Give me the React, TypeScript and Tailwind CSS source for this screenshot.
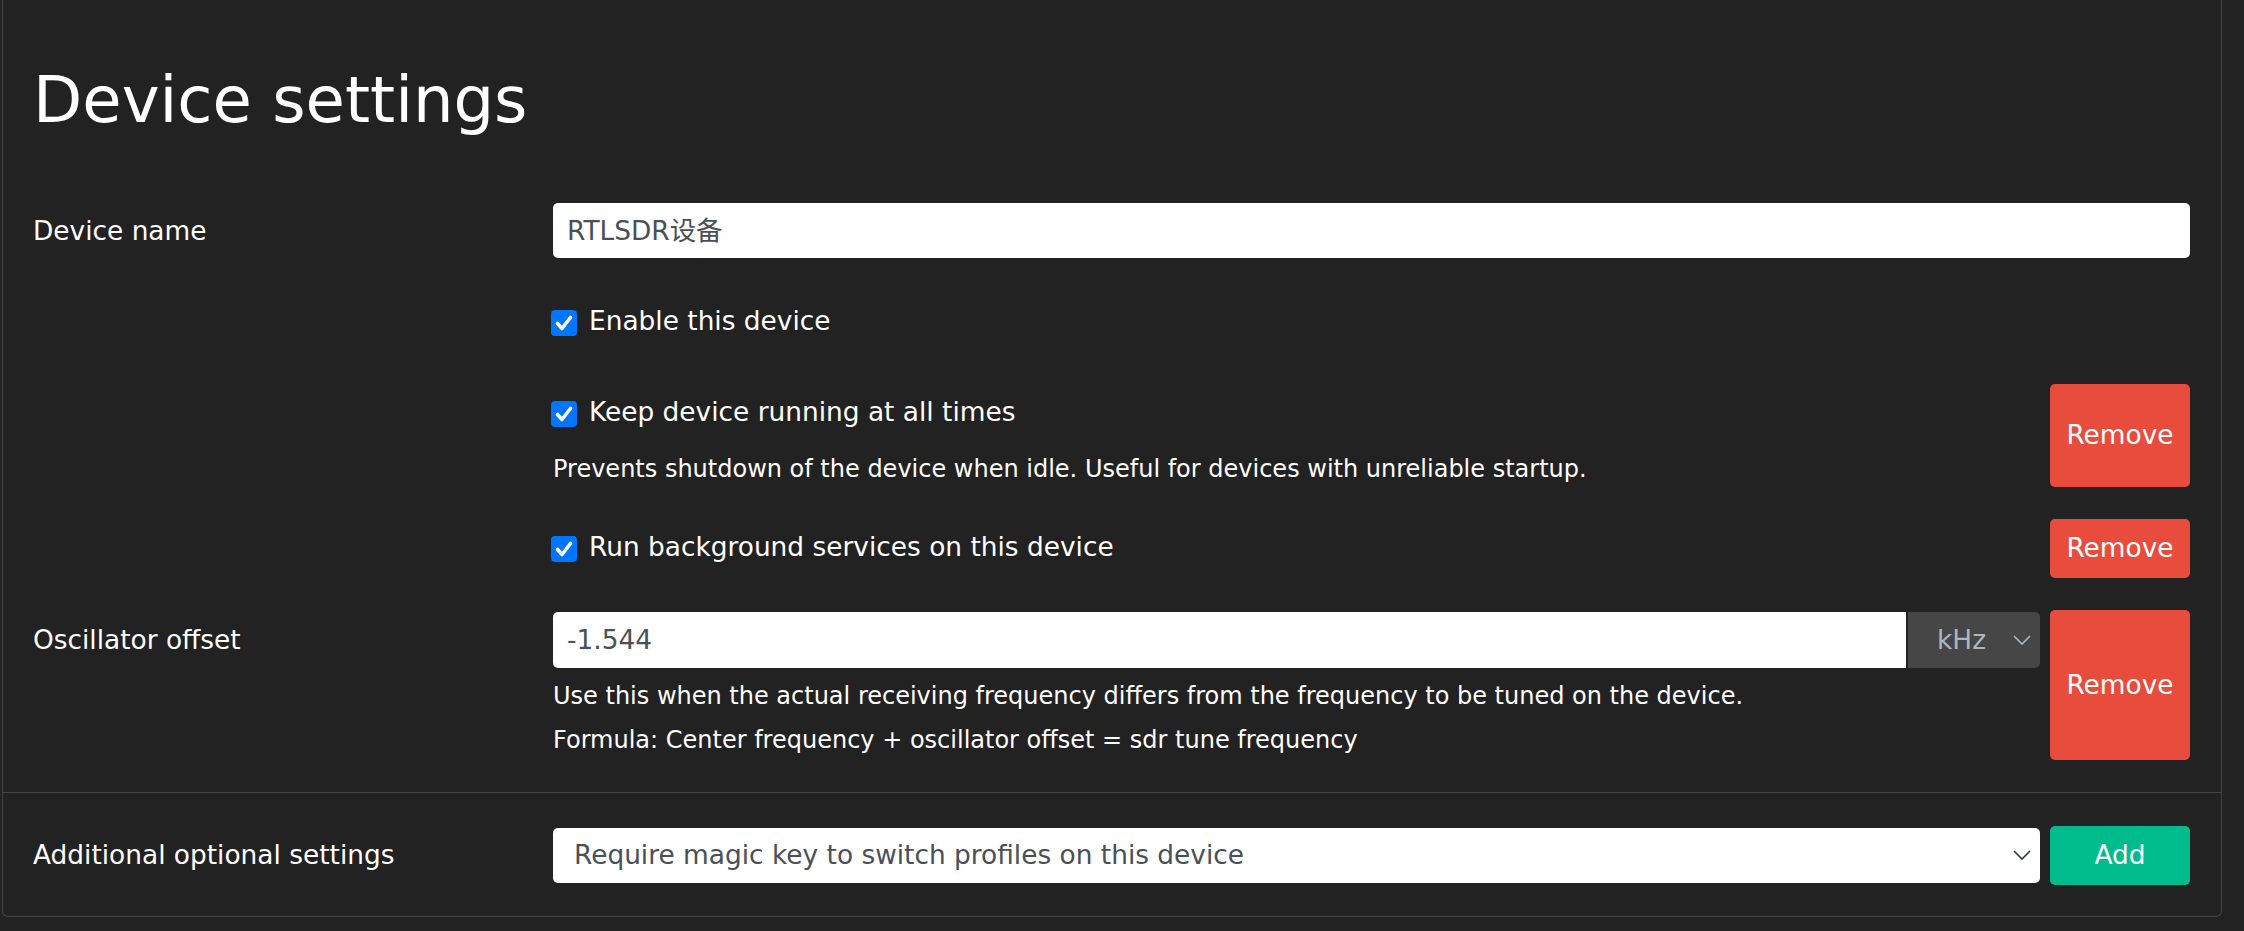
import React from 'react';

const Chevron = ({ color }: { color: string }) => (
  <svg width="18" height="10" viewBox="0 0 18 10" className="shrink-0">
    <path d="M1 1l8 8 8-8" fill="none" stroke={color} strokeWidth="1.7" />
  </svg>
);

const CheckBox = () => (
  <div className="mt-[9px] -ml-[2px] w-[26px] h-[26px] rounded-[4px] bg-[#0075ff] flex items-center justify-center shrink-0">
    <svg width="26" height="26" viewBox="0 0 26 26">
      <path d="M6.5 13.5l4.5 5 8.5-11" fill="none" stroke="white" strokeWidth="3.6" strokeLinecap="round" strokeLinejoin="round" />
    </svg>
  </div>
);

const CheckLine = ({ children }: { children: React.ReactNode }) => (
  <div className="flex items-start">
    <CheckBox />
    <span className="ml-[12px] leading-[39.6px]">{children}</span>
  </div>
);

const RemoveButton = () => (
  <button className="w-[140px] ml-[10px] min-h-[59px] shrink-0 bg-[#e74c3c] rounded-[5px] text-white text-[26.4px] flex items-center justify-center">
    Remove
  </button>
);

const App = () => {
  return (
    <div className="min-h-screen bg-[#222] text-white text-[26.4px] pb-[13px] font-['DejaVu_Sans','Noto_Sans_CJK_SC',sans-serif]">
      <div className="ml-[2px] mr-[22px] border-x border-b border-[#444] rounded-b-[6px]">
        <div className="pl-[30px] pr-[31px] pt-[61px] pb-[32px]">
          <h1 className="text-[64px] leading-[79px] font-normal">Device settings</h1>

          {/* device name */}
          <div className="mt-[63px] flex">
            <label className="w-[520px] shrink-0 h-[55px] flex items-center leading-[39.6px]">Device name</label>
            <div className="flex-1 h-[55px] bg-white rounded-[5px] px-[14px] flex items-center text-[#495057]">
              RTLSDR设备
            </div>
          </div>

          {/* enable */}
          <div className="mt-[43px] flex">
            <div className="w-[520px] shrink-0" />
            <div className="flex-1">
              <CheckLine>Enable this device</CheckLine>
            </div>
          </div>

          {/* keep running */}
          <div className="mt-[43px] flex">
            <div className="w-[520px] shrink-0" />
            <div className="flex-1 pt-[8px]">
              <CheckLine>Keep device running at all times</CheckLine>
              <p className="mt-[21px] text-[24px] leading-[34.6px]">
                Prevents shutdown of the device when idle. Useful for devices with unreliable startup.
              </p>
            </div>
            <RemoveButton />
          </div>

          {/* background services */}
          <div className="mt-[32px] flex">
            <div className="w-[520px] shrink-0" />
            <div className="flex-1 pt-[8px]">
              <CheckLine>Run background services on this device</CheckLine>
            </div>
            <RemoveButton />
          </div>

          {/* oscillator offset */}
          <div className="mt-[32px] flex">
            <label className="w-[520px] shrink-0 mt-[2px] h-[56px] flex items-center leading-[39.6px]">Oscillator offset</label>
            <div className="flex-1 pt-[2px] pb-[2px]">
              <div className="flex h-[56px] gap-[2px]">
                <div className="flex-1 bg-white rounded-l-[5px] px-[14px] flex items-center text-[#495057]">-1.544</div>
                <div className="w-[132px] bg-[#464646] rounded-r-[5px] flex items-center pl-[29px] pr-[9px] text-[#adb5bd]">
                  <span className="flex-1">kHz</span>
                  <Chevron color="#adb5bd" />
                </div>
              </div>
              <p className="mt-[11px] text-[24px] leading-[34.5px]">
                Use this when the actual receiving frequency differs from the frequency to be tuned on the device.
              </p>
              <p className="mt-[10px] text-[24px] leading-[34.5px]">
                Formula: Center frequency + oscillator offset = sdr tune frequency
              </p>
            </div>
            <RemoveButton />
          </div>
        </div>

        {/* additional settings */}
        <div className="border-t border-[#444] pl-[30px] pr-[31px] pt-[33px] pb-[31px]">
          <div className="flex h-[59px] items-center">
            <label className="w-[520px] shrink-0 leading-[39.6px]">Additional optional settings</label>
            <div className="flex-1 h-[55px] bg-white rounded-[5px] pl-[21px] pr-[9px] flex items-center text-[#495057]">
              <span className="flex-1">Require magic key to switch profiles on this device</span>
              <Chevron color="#343a40" />
            </div>
            <button className="w-[140px] ml-[10px] h-[59px] shrink-0 bg-[#00bc8c] rounded-[5px] text-white text-[26.4px]">
              Add
            </button>
          </div>
        </div>
      </div>
    </div>
  );
};

export default App;
